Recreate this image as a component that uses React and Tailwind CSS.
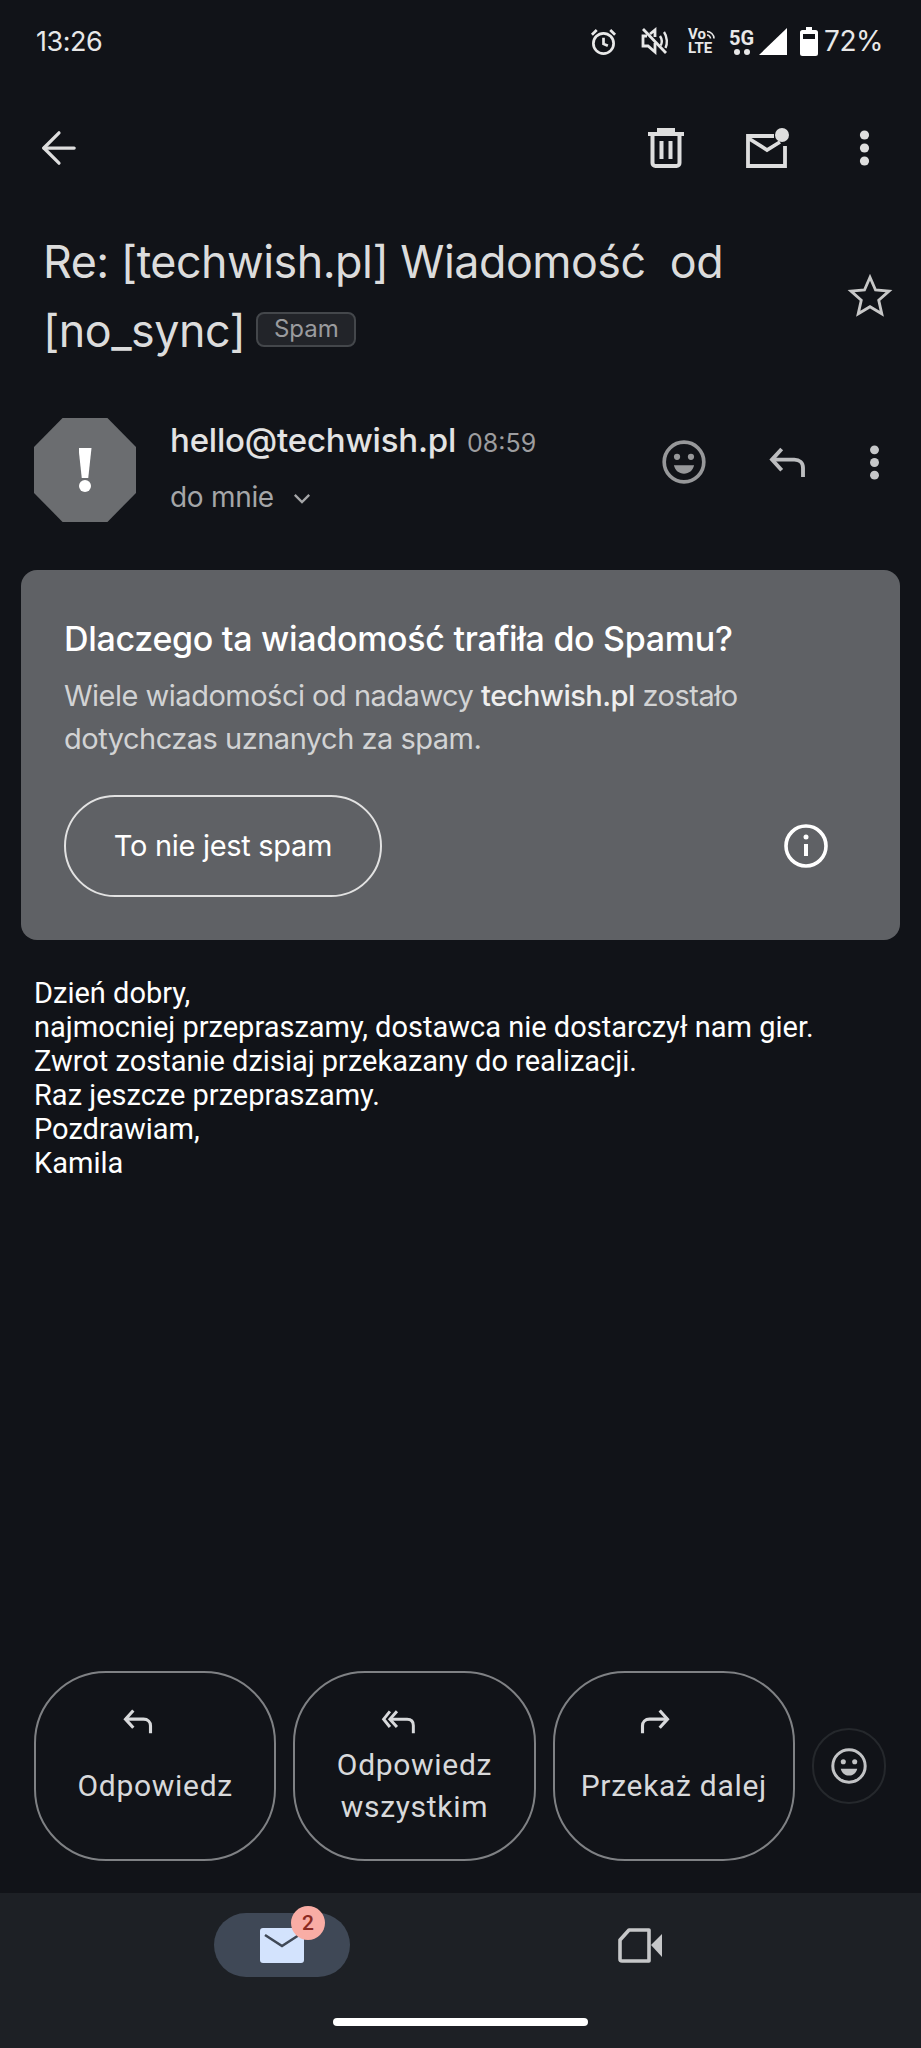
import { ArrowLeft } from "lucide-react";

const GSANS = "font-['Inter',sans-serif]";

function Dots({ className }) {
  return (
    <svg viewBox="0 0 10 36" className={className} fill="currentColor">
      <circle cx="5" cy="5" r="4.6" />
      <circle cx="5" cy="18" r="4.6" />
      <circle cx="5" cy="31" r="4.6" />
    </svg>
  );
}

function Smiley({ className }) {
  return (
    <svg viewBox="0 0 24 24" className={className} fill="none" stroke="currentColor" strokeWidth="2">
      <circle cx="12" cy="12" r="10.800" />
      <circle cx="8.200" cy="9.200" r="1.700" fill="currentColor" stroke="none" />
      <circle cx="15.800" cy="9.200" r="1.700" fill="currentColor" stroke="none" />
      <path d="M6.500 13.800h11c-.6 2.800-2.800 4.600-5.500 4.600s-4.900-1.800-5.500-4.600z" fill="currentColor" stroke="none" />
    </svg>
  );
}

function ReplyIcon({ className }) {
  return (
    <svg viewBox="0 0 40 32" className={className} fill="none" stroke="currentColor" strokeWidth="4">
      <path d="M14 2 4 13l10 11" />
      <path d="M4 13h23c5.500 0 9 3.500 9 8.500V31" />
    </svg>
  );
}

function ReplyAllIcon({ className }) {
  return (
    <svg viewBox="0 0 44 32" className={className} fill="none" stroke="currentColor" strokeWidth="3.800">
      <path d="M11 3 3 13l8 10" />
      <path d="M20 3 11 13l9 10" />
      <path d="M11 13h22c5 0 8 3 8 8v10" />
    </svg>
  );
}

function ForwardIcon({ className }) {
  return (
    <svg viewBox="0 0 40 32" className={className} fill="none" stroke="currentColor" strokeWidth="4">
      <path d="M26 2l10 11-10 11" />
      <path d="M36 13H13c-5.500 0-9 3.500-9 8.500V31" />
    </svg>
  );
}

function StatusIcons() {
  return (
    <div className="flex items-center text-[#e8e8e8]">
      {/* alarm */}
      <svg viewBox="0 0 28 28" className="w-[27px] h-[27px] mr-[24px]" fill="none" stroke="currentColor" strokeWidth="2.800">
        <circle cx="14" cy="16" r="10.500" />
        <path d="M14 10v6.500l4.500 2" />
        <path d="M2 7l5-5M26 7l-5-5" />
      </svg>
      {/* muted speaker */}
      <svg viewBox="0 0 28 28" className="w-[28px] h-[28px] mr-[19px]" fill="none" stroke="currentColor" strokeWidth="2.800">
        <path d="M6 9H2v10h5l7 6v-9M14 10V3L9 7" />
        <path d="M19 9c2 3 2 7 .8 9.500M23 5c3.500 5 3.500 12 1.500 16" strokeWidth="2.400" />
        <path d="M2 2l23 24" />
      </svg>
      {/* VoLTE */}
      <div className="flex flex-col items-start mr-[12px] font-['Roboto',sans-serif] font-bold text-[15px] leading-[14px] w-[29px]">
        <span className="flex items-center">
          Vo
          <svg viewBox="0 0 10 10" className="w-[10px] h-[10px]" fill="none" stroke="currentColor" strokeWidth="1.600">
            <path d="M1 2.500c3.500 0 7 3 7 7M1 6c1.500 0 3.500 1.500 3.500 3.500" />
          </svg>
        </span>
        <span>LTE</span>
      </div>
      {/* 5G */}
      <div className="flex flex-col items-center mr-[5px] w-[25px] font-['Roboto',sans-serif] font-bold text-[20px] leading-[20px]">
        <span>5G</span>
        <span className="flex gap-[4px] mt-[1px]">
          <span className="w-[6px] h-[6px] rounded-full bg-[#e8e8e8]" />
          <span className="w-[6px] h-[6px] rounded-full bg-[#e8e8e8]" />
        </span>
      </div>
      {/* signal */}
      <svg viewBox="0 0 28 27" className="w-[28px] h-[27px] mr-[13px]" fill="white">
        <path d="M28 0v27H0z" />
      </svg>
      {/* battery */}
      <svg viewBox="0 0 18 29" className="w-[18px] h-[29px] mr-[6px]" fill="white">
        <path fillRule="evenodd" d="M6 0h6v3h3.500A2.500 2.500 0 0 1 18 5.500V26.500A2.500 2.500 0 0 1 15.500 29h-13A2.500 2.500 0 0 1 0 26.500V5.500A2.500 2.500 0 0 1 2.500 3H6zM3 7v5h12V7z" />
      </svg>
      <span className="text-[28px] leading-none tracking-[-0.5px]">72%</span>
    </div>
  );
}

function ReplyButton({ icon, children }) {
  return (
    <button className="flex-1 h-[190px] rounded-[72px] border-2 border-[#7f8184] flex flex-col items-center justify-start pt-[36px] text-[#d8d9db]">
      {icon}
      <span className="flex-1 flex items-center justify-center text-[30px] leading-[42px] tracking-[0.700px] pb-[21px] text-center">
        {children}
      </span>
    </button>
  );
}

export default function App() {
  return (
    <div className="w-[921px] h-[2048px] bg-[#111318] flex flex-col font-['Roboto',sans-serif] overflow-hidden">
      {/* status bar */}
      <div className={`h-[82px] pl-[36px] pr-[38px] flex items-center justify-between text-[#e8e8e8] ${GSANS}`}>
        <span className="text-[27px] leading-none tracking-[-0.5px]">13:26</span>
        <StatusIcons />
      </div>

      {/* toolbar */}
      <div className="mt-[33px] h-[66px] pl-[33px] pr-[51px] flex items-center text-[#dedede]">
        <ArrowLeft size={52} strokeWidth={1.500} className="shrink-0" />
        <svg viewBox="0 0 36 40" className="w-[36px] h-[40px] ml-auto" fill="none" stroke="currentColor" strokeWidth="4">
          <path d="M0 6h36M11 6V2h14v4" />
          <path d="M4.500 6v29a3 3 0 0 0 3 3h21a3 3 0 0 0 3-3V6" />
          <path d="M13.500 13v18M22.500 13v18" />
        </svg>
        <svg viewBox="0 0 44 40" className="w-[44px] h-[40px] ml-[61px]" fill="none" stroke="currentColor" strokeWidth="3.800">
          <path d="M29 8H3v30h37V18" />
          <path d="M3 10l19 12 13-8" />
          <circle cx="37" cy="7" r="7" fill="currentColor" stroke="none" />
        </svg>
        <Dots className="w-[11px] h-[36px] ml-[70px]" />
      </div>

      {/* subject */}
      <div className="mt-[47px] pl-[43px] pr-[32px] flex items-center">
        <h1 className={`flex-1 text-[44.800px] leading-[69px] text-[#dcdcdc] ${GSANS} tracking-[-0.500px]`}>
          Re: [techwish.pl] Wiadomość&nbsp; od
          <br />
          [no_sync]
          <span className="inline-block align-[10px] ml-[11px] h-[35px] w-[100px] rounded-[8px] border-2 border-[#44474b] bg-[#222429] text-[#9a9b9e] text-[24px] leading-[30px] text-center tracking-normal">
            Spam
          </span>
        </h1>
        <svg viewBox="2 2.500 20 19.200" className="w-[38px] h-[37px] shrink-0 mb-[4px] overflow-visible text-[#c8c8c8]" fill="none" stroke="currentColor" strokeWidth="1.500">
          <polygon points="12,2.500 14.900,9.200 22,9.800 16.600,14.600 18.200,21.700 12,18 5.800,21.700 7.400,14.600 2,9.800 9.100,9.200" />
        </svg>
      </div>

      {/* sender row */}
      <div className="mt-[52px] pl-[34px] pr-[41px] flex items-start">
        <div className="w-[102px] h-[104px] bg-[#6b6d70] [clip-path:polygon(28%_0,72%_0,100%_28%,100%_72%,72%_100%,28%_100%,0_72%,0_28%)] flex flex-col items-center justify-center text-white">
          <span className="w-[13px] h-[30px] bg-white [clip-path:polygon(0_0,100%_0,75%_100%,25%_100%)]" />
          <span className="w-[12px] h-[12px] rounded-full bg-white mt-[2px]" />
        </div>
        <div className="ml-[34px]">
          <div className="flex items-baseline">
            <span className={`text-[33px] leading-[44px] font-medium text-[#e3e3e3] ${GSANS} tracking-[-0.200px]`}>hello@techwish.pl</span>
            <span className={`ml-[11px] text-[25px] text-[#9d9d9f] ${GSANS}`}>08:59</span>
          </div>
          <div className={`mt-[14px] flex items-center text-[28px] leading-[40px] text-[#a5a6a8] ${GSANS} tracking-[-0.300px]`}>
            do mnie
            <svg viewBox="0 0 20 12" className="w-[18px] h-[11px] ml-[19px] mt-[3px]" fill="none" stroke="currentColor" strokeWidth="2.600">
              <path d="M2 2l8 8 8-8" />
            </svg>
          </div>
        </div>
        <div className="ml-auto mt-[22px] flex items-center">
          <Smiley className="w-[44px] h-[44px] text-[#97989a]" />
          <ReplyIcon className="w-[39px] h-[31px] ml-[62px] text-[#bcbdbf]" />
          <Dots className="w-[11px] h-[35px] ml-[62px] text-[#c6c7c9]" />
        </div>
      </div>

      {/* spam card */}
      <div className="mx-[21px] mt-[48px] h-[370px] rounded-[16px] bg-[#5f6165] pt-[49px] pl-[43px] pr-[70px]">
        <h2 className={`text-[34px] leading-[40px] font-medium text-white ${GSANS} tracking-[-0.300px]`}>Dlaczego ta wiadomość trafiła do Spamu?</h2>
        <p className={`mt-[15px] text-[29px] leading-[43px] text-[#d2d3d4] ${GSANS} tracking-[-0.500px]`}>
          Wiele wiadomości od nadawcy <span className="font-medium text-[#eeeeee]">techwish.pl</span> zostało dotychczas uznanych za spam.
        </p>
        <div className="mt-[35px] flex items-center justify-between">
          <button className={`w-[318px] h-[102px] rounded-full border-2 border-[#e2e2e2] text-[29px] text-white ${GSANS} tracking-[-0.300px]`}>To nie jest spam</button>
          <svg viewBox="0 0 44 44" className="w-[44px] h-[44px] mr-[2px]" fill="none" stroke="white" strokeWidth="3.600">
            <circle cx="22" cy="22" r="20" />
            <path d="M22 20v12" strokeWidth="4" />
            <circle cx="22" cy="13" r="2.500" fill="white" stroke="none" />
          </svg>
        </div>
      </div>

      {/* message body */}
      <div className="mt-[36px] pl-[34px] text-[29px] leading-[34px] text-white">
        <p>Dzień dobry,</p>
        <p>najmocniej przepraszamy, dostawca nie dostarczył nam gier.</p>
        <p>Zwrot zostanie dzisiaj przekazany do realizacji.</p>
        <p>Raz jeszcze przepraszamy.</p>
        <p>Pozdrawiam,</p>
        <p>Kamila</p>
      </div>

      {/* reply actions */}
      <div className="mt-auto pl-[34px] pr-[35px] flex items-center">
        <div className="flex-1 flex gap-[17px]">
          <ReplyButton icon={<ReplyIcon className="w-[32px] h-[25px] mr-[34px]" />}>Odpowiedz</ReplyButton>
          <ReplyButton icon={<ReplyAllIcon className="w-[35px] h-[25px] mr-[32px]" />}>
            Odpowiedz
            <br />
            wszystkim
          </ReplyButton>
          <ReplyButton icon={<ForwardIcon className="w-[32px] h-[25px] mr-[38px]" />}>Przekaż dalej</ReplyButton>
        </div>
        <div className="ml-[17px] w-[74px] h-[76px] rounded-full border-2 border-[#25282c] flex items-center justify-center text-[#c2c3c5]">
          <Smiley className="w-[36px] h-[36px]" />
        </div>
      </div>

      {/* bottom nav */}
      <div className="mt-[32px] h-[155px] bg-[#1d2025] flex flex-col">
        <div className="mt-[20px] ml-[214px] flex items-center">
          <div className="relative w-[136px] h-[64px] rounded-full bg-[#3f4856] flex items-center justify-center">
            <svg viewBox="0 0 44 35" className="w-[44px] h-[35px]">
              <rect width="44" height="35" rx="3" fill="#d3e3fd" />
              <path d="M5 7l17 11 17-11" fill="none" stroke="#3f4856" strokeWidth="2.600" />
            </svg>
            <span className="absolute left-[77px] -top-[7px] w-[34px] h-[34px] rounded-full bg-[#f9ada5] text-[#8b2a22] text-[21px] font-medium leading-[34px] text-center">2</span>
          </div>
          <svg viewBox="0 0 44 35" className="w-[44px] h-[35px] ml-[268px] text-[#c6c7c9]" fill="none" stroke="currentColor" strokeWidth="3.600">
            <path d="M2 12 11 2h20v31H4a2 2 0 0 1-2-2z" strokeLinejoin="round" />
            <path d="M33 17 44 6v23z" fill="currentColor" stroke="none" />
          </svg>
        </div>
        <div className="mt-[41px] mx-auto w-[255px] h-[8px] rounded-full bg-white" />
      </div>
    </div>
  );
}
